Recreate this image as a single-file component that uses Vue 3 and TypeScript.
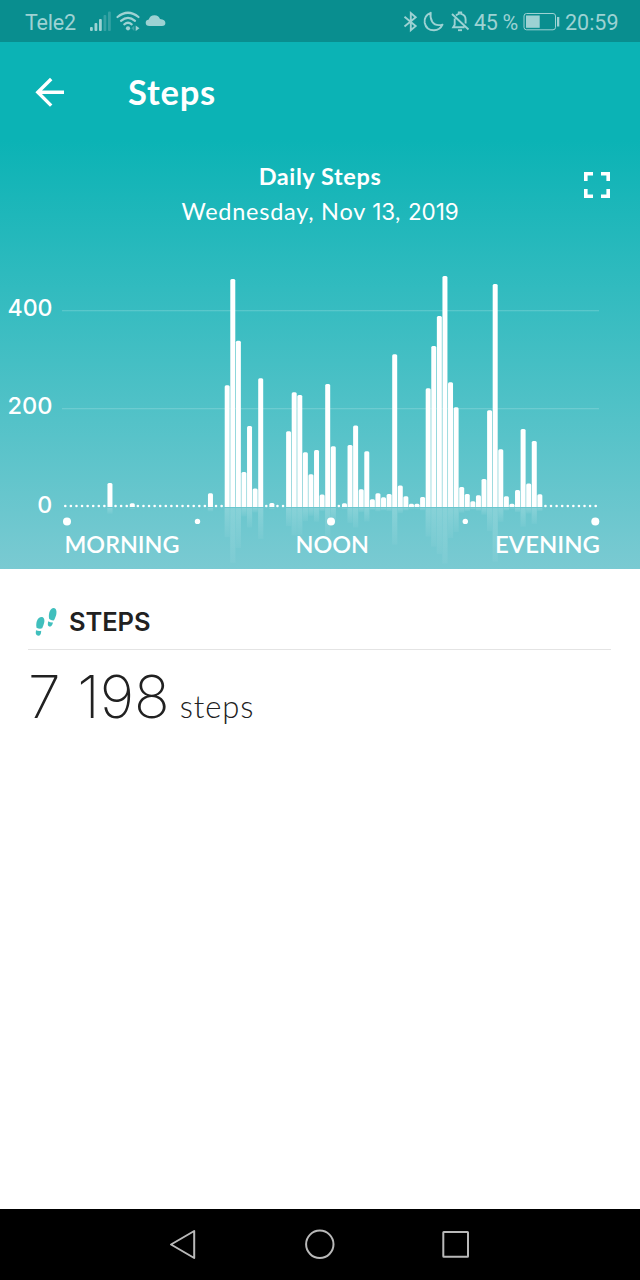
<script setup lang="ts">
interface Bar {
  slot: number
  top: number
}

const BASELINE = 507
const FIRST_X = 65.3
const SLOT_WIDTH = 5.583
const SLOT_COUNT = 96

// Quarter-hour slots with activity: [slot index, y of the bar's top edge]
const readings: [number, number][] = [
  [8, 483], [12, 503.3], [26, 493.3],
  [29, 385.3], [30, 279], [31, 340.7], [32, 472], [33, 426], [34, 488.5], [35, 378.3], [37, 503],
  [40, 431.2], [41, 392.3], [42, 395], [43, 452.2], [44, 474.2], [45, 450], [46, 494.6], [47, 384], [48, 446.3],
  [50, 503.3], [51, 445], [52, 425.6], [53, 489.3], [54, 451.3], [55, 499.3], [56, 493.3], [57, 497.3], [58, 494],
  [59, 354.3], [60, 485.6], [61, 496.3], [62, 503.8], [63, 503.8], [64, 497],
  [65, 388.3], [66, 346], [67, 316], [68, 276], [69, 382.3], [70, 407.3], [71, 487], [72, 494],
  [73, 501.3], [74, 495.3], [75, 479], [76, 410.3], [77, 284], [78, 449.3], [79, 496.3], [80, 503.8],
  [81, 490], [82, 429], [83, 483.6], [84, 441], [85, 494.3],
]

const bars: Bar[] = readings.map(([slot, top]) => ({ slot, top }))
const filled = new Set(bars.map((b) => b.slot))
const emptySlots = Array.from({ length: SLOT_COUNT }, (_, i) => i).filter((i) => !filled.has(i))

const centre = (slot: number): number => FIRST_X + slot * SLOT_WIDTH
const barPath = ({ slot, top }: Bar): string => {
  const l = centre(slot) - 2.5
  const r = centre(slot) + 2.5
  const c = Math.min(1.5, (BASELINE - top) / 2)
  return `M${l} ${BASELINE}V${top + c}Q${l} ${top} ${l + c} ${top}H${r - c}Q${r} ${top} ${r} ${top + c}V${BASELINE}Z`
}
const reflection = (b: Bar): number => (BASELINE - b.top) * 0.24

const gridLines = [
  { y: 310.5, label: '400', x: 7.5, width: 45 },
  { y: 408.5, label: '200', x: 7.5, width: 45 },
]
const markers = [
  { x: 67, r: 4 },
  { x: 197.5, r: 2.7 },
  { x: 331, r: 4 },
  { x: 465.3, r: 2.7 },
  { x: 595.3, r: 4 },
]
const periods = [
  { x: 64.5, width: 115, label: 'MORNING' },
  { x: 295.5, width: 73.5, label: 'NOON' },
  { x: 495, width: 105, label: 'EVENING' },
]
</script>

<template>
  <div class="screen">
    <div class="status">
      <span class="carrier">Tele2</span>
      <svg class="status-left" width="80" height="42" viewBox="88 0 80 42">
        <g fill="#9dd2d3">
          <rect x="90" y="27" width="2.8" height="4" rx="1" />
          <rect x="94.5" y="23" width="2.8" height="8" rx="1" />
          <rect x="99" y="19" width="2.8" height="12" rx="1" />
          <rect x="103.5" y="15" width="2.8" height="16" rx="1" opacity=".3" />
          <rect x="108" y="11.500" width="2.8" height="19.500" rx="1" opacity=".3" />
          <circle cx="128" cy="28.300" r="2.100" />
          <path d="M135.700 25.500L139.500 28.200L135.700 31Z" />
          <path d="M134.300 25.500L131.300 28.200L134.300 31Z" opacity=".35" />
          <path d="M149.500 26Q145.700 26 145.700 22.800Q145.700 20 148.700 19.500Q150 15.200 154.500 15.200Q158.800 15.200 160 19Q165.400 19.600 165.400 23Q165.400 26 162 26Z" />
        </g>
        <g fill="none" stroke="#9dd2d3" stroke-width="2.200" stroke-linecap="round">
          <path d="M117.500 17Q128 8.500 138.500 17" />
          <path d="M121 20.800Q128 14.800 135 20.800" />
          <path d="M124.300 24.300Q128 21.200 131.700 24.300" />
        </g>
      </svg>
      <svg class="status-right" width="72" height="42" viewBox="400 0 72 42">
        <g fill="none" stroke="#9dd2d3" stroke-width="1.9" stroke-linejoin="miter">
          <path d="M404.500 16.800L415.700 26L410.800 30.200V13L415.700 17.200L404.500 26.500" />
          <path d="M430.700 12.800Q423.800 15.500 424.700 22.700Q426.200 30.300 434 30.300Q440 30 442.500 24.600Q435.500 26.500 432.200 21.700Q429.800 17.500 430.700 12.800Z" stroke-linejoin="round" />
          <path d="M456 15.500Q457.300 14.200 458.800 13.900V12.500H461.200V13.900Q465.600 15 465.600 19.500V23.500M464.500 27.300H453.200L454.700 24.800V18.500M452 14L468.500 29.500" />
          <path d="M458 30.200H462" />
        </g>
      </svg>
      <span class="percent">45 %</span>
      <svg class="battery" width="38" height="42" viewBox="522 0 38 42">
        <rect x="524" y="13.500" width="31.500" height="16.300" rx="2.500" fill="none" stroke="#9dd2d3" stroke-width="1" />
        <rect x="526" y="15.500" width="13.700" height="12.300" fill="#9dd2d3" />
        <rect x="557" y="17" width="2.300" height="9.500" fill="#9dd2d3" />
      </svg>
      <span class="clock">20:59</span>
    </div>

    <header class="toolbar">
      <svg class="back" width="32" height="32" viewBox="34 76 32 32" fill="none" stroke="#fff" stroke-width="3.400">
        <path d="M64 92.300H38M51.200 79L37.800 92.300L51.200 105.600" />
      </svg>
      <h1>Steps</h1>
    </header>

    <section class="chart">
      <div class="chart-head">
        <div class="chart-title">Daily Steps</div>
        <div class="chart-date">Wednesday, Nov <span class="figures">13</span>, <span class="figures">2019</span></div>
        <svg class="expand" width="28" height="28" viewBox="0 0 28 28" fill="none" stroke="#fff" stroke-width="3.600">
          <path d="M2.800 10V2.800H10M18 2.800H25.200V10M25.200 18V25.200H18M10 25.200H2.800V18" />
        </svg>
      </div>
      <svg class="plot" width="640" height="327" viewBox="0 242 640 327">
        <defs>
          <linearGradient id="mirror" x1="0" y1="0" x2="0" y2="1">
            <stop offset="0" stop-color="#fff" stop-opacity=".2" />
            <stop offset="1" stop-color="#fff" stop-opacity=".04" />
          </linearGradient>
        </defs>
        <g v-for="line in gridLines" :key="line.label">
          <rect x="62" :y="line.y - 0.5" width="537" height="1.300" fill="#fff" opacity=".17" />
          <text class="axis" :x="line.x" :y="line.y + 5" :textLength="line.width" lengthAdjust="spacingAndGlyphs">{{ line.label }}</text>
        </g>
        <text class="axis" x="37.300" y="512.500" textLength="15" lengthAdjust="spacingAndGlyphs">0</text>
        <rect
          v-for="b in bars" :key="'m' + b.slot"
          :x="centre(b.slot) - 2.6" y="508" width="5.200" :height="reflection(b)" fill="url(#mirror)"
        />
        <circle v-for="s in emptySlots" :key="'d' + s" :cx="centre(s)" cy="506" r="1.300" fill="#fff" />
        <path v-for="b in bars" :key="'b' + b.slot" :d="barPath(b)" fill="#fff" />
        <circle v-for="m in markers" :key="m.x" :cx="m.x" cy="521.400" :r="m.r" fill="#fff" />
        <text
          v-for="p in periods" :key="p.label" class="period"
          :x="p.x" y="553" :textLength="p.width" lengthAdjust="spacingAndGlyphs"
        >{{ p.label }}</text>
      </svg>
    </section>

    <main class="summary">
      <div class="summary-head">
        <svg width="22" height="30" viewBox="35 607 22 30" fill="#40bfbd">
          <path d="M41.500 617C44 617 44.800 619.500 44.200 622.500Q43.700 625 42.200 628.300Q39.500 629.300 36.500 627.700C35.500 622.500 37.500 617 41.500 617Z" />
          <path d="M36 630.200Q38.500 631.300 41.200 630.700Q41.200 635.700 38.300 635.700Q35 635.500 36 630.200Z" />
          <path d="M53.700 608C56.500 608 57 612 56 615.500Q55 618.500 54 620.300Q51.500 620.700 49.200 619C48 613.500 50.200 608 53.700 608Z" />
          <path d="M48.300 621.200Q50.500 622.800 53 622.500Q52 627 49.500 626.600Q46.800 625.800 48.300 621.200Z" />
        </svg>
        <h2>STEPS</h2>
      </div>
      <div class="total">
        <span class="number">7 198</span>
        <span class="unit">steps</span>
      </div>
    </main>

    <nav class="nav">
      <svg width="640" height="71" viewBox="0 1209 640 71" fill="none" stroke="#b9b9b9" stroke-width="2" stroke-linejoin="round">
        <path d="M171 1244.500L194.200 1231V1258Z" />
        <circle cx="319.800" cy="1244.300" r="13.700" />
        <rect x="443.300" y="1232" width="24.700" height="24.700" rx=".5" />
      </svg>
    </nav>
  </div>
</template>

<style>
body {
  margin: 0;
}
</style>

<style scoped>
.screen {
  width: 640px;
  height: 1280px;
  display: flex;
  flex-direction: column;
  background: #fff;
  font-family: Lato, "Open Sans", sans-serif;
  overflow: hidden;
}
svg {
  display: block;
  flex: none;
}
.status {
  height: 42px;
  flex: none;
  display: flex;
  box-sizing: border-box;
  padding-left: 25px;
  background: #098e8f;
  color: #9dd2d3;
  font: 21.5px/45px Roboto, sans-serif;
  white-space: nowrap;
}
.carrier {
  width: 63px;
  letter-spacing: -.2px;
}
.status-right {
  margin-left: 232px;
}
.percent {
  width: 48px;
  padding-left: 2px;
  letter-spacing: -.3px;
}
.clock {
  margin-left: 5px;
}
.toolbar {
  height: 98px;
  flex: none;
  display: flex;
  align-items: center;
  box-sizing: border-box;
  padding: 0 0 0 34px;
  background: #0bb3b5;
}
.back {
  margin-top: 2px;
}
h1 {
  margin: 2px 0 0 62px;
  color: #fff;
  font-size: 34.500px;
  line-height: 40px;
  font-weight: 700;
  letter-spacing: .8px;
}
.chart {
  height: 429px;
  flex: none;
  background: linear-gradient(#0bb3b5, #7acad2);
  color: #fff;
}
.chart-head {
  position: relative;
  height: 102px;
  box-sizing: border-box;
  padding-top: 20px;
  text-align: center;
}
.chart-title {
  font-size: 23.500px;
  line-height: 32px;
  font-weight: 700;
  letter-spacing: .6px;
}
.chart-date {
  margin-top: 3px;
  font-size: 23.500px;
  line-height: 32px;
  letter-spacing: .75px;
}
.figures {
  font-family: Inter, sans-serif;
  font-size: 22.500px;
  letter-spacing: -.1px;
}
.expand {
  position: absolute;
  top: 31px;
  right: 29px;
}
.axis {
  fill: #fff;
  font: 500 23px Inter, sans-serif;
}
.period {
  fill: #fff;
  font: 600 23px Lato, sans-serif;
}
.summary {
  flex: 1;
  padding: 26px 29px 0 28px;
}
.summary-head {
  display: flex;
  align-items: center;
  gap: 12px;
  height: 54px;
  padding-left: 7px;
  border-bottom: 1px solid #e4e4e4;
  color: #212121;
}
h2 {
  margin: -1px 0 0;
  font: 600 25.500px/54px Inter, sans-serif;
  letter-spacing: -.1px;
}
.total {
  display: flex;
  align-items: baseline;
  margin-top: 10.500px;
  color: #212121;
}
.number {
  font: 250 59px/72px Inter, sans-serif;
  letter-spacing: 0;
  white-space: nowrap;
}
.unit {
  margin-left: 10px;
  font-size: 31px;
  font-weight: 300;
  letter-spacing: .9px;
}
.nav {
  height: 71px;
  flex: none;
  background: #000;
}
</style>
